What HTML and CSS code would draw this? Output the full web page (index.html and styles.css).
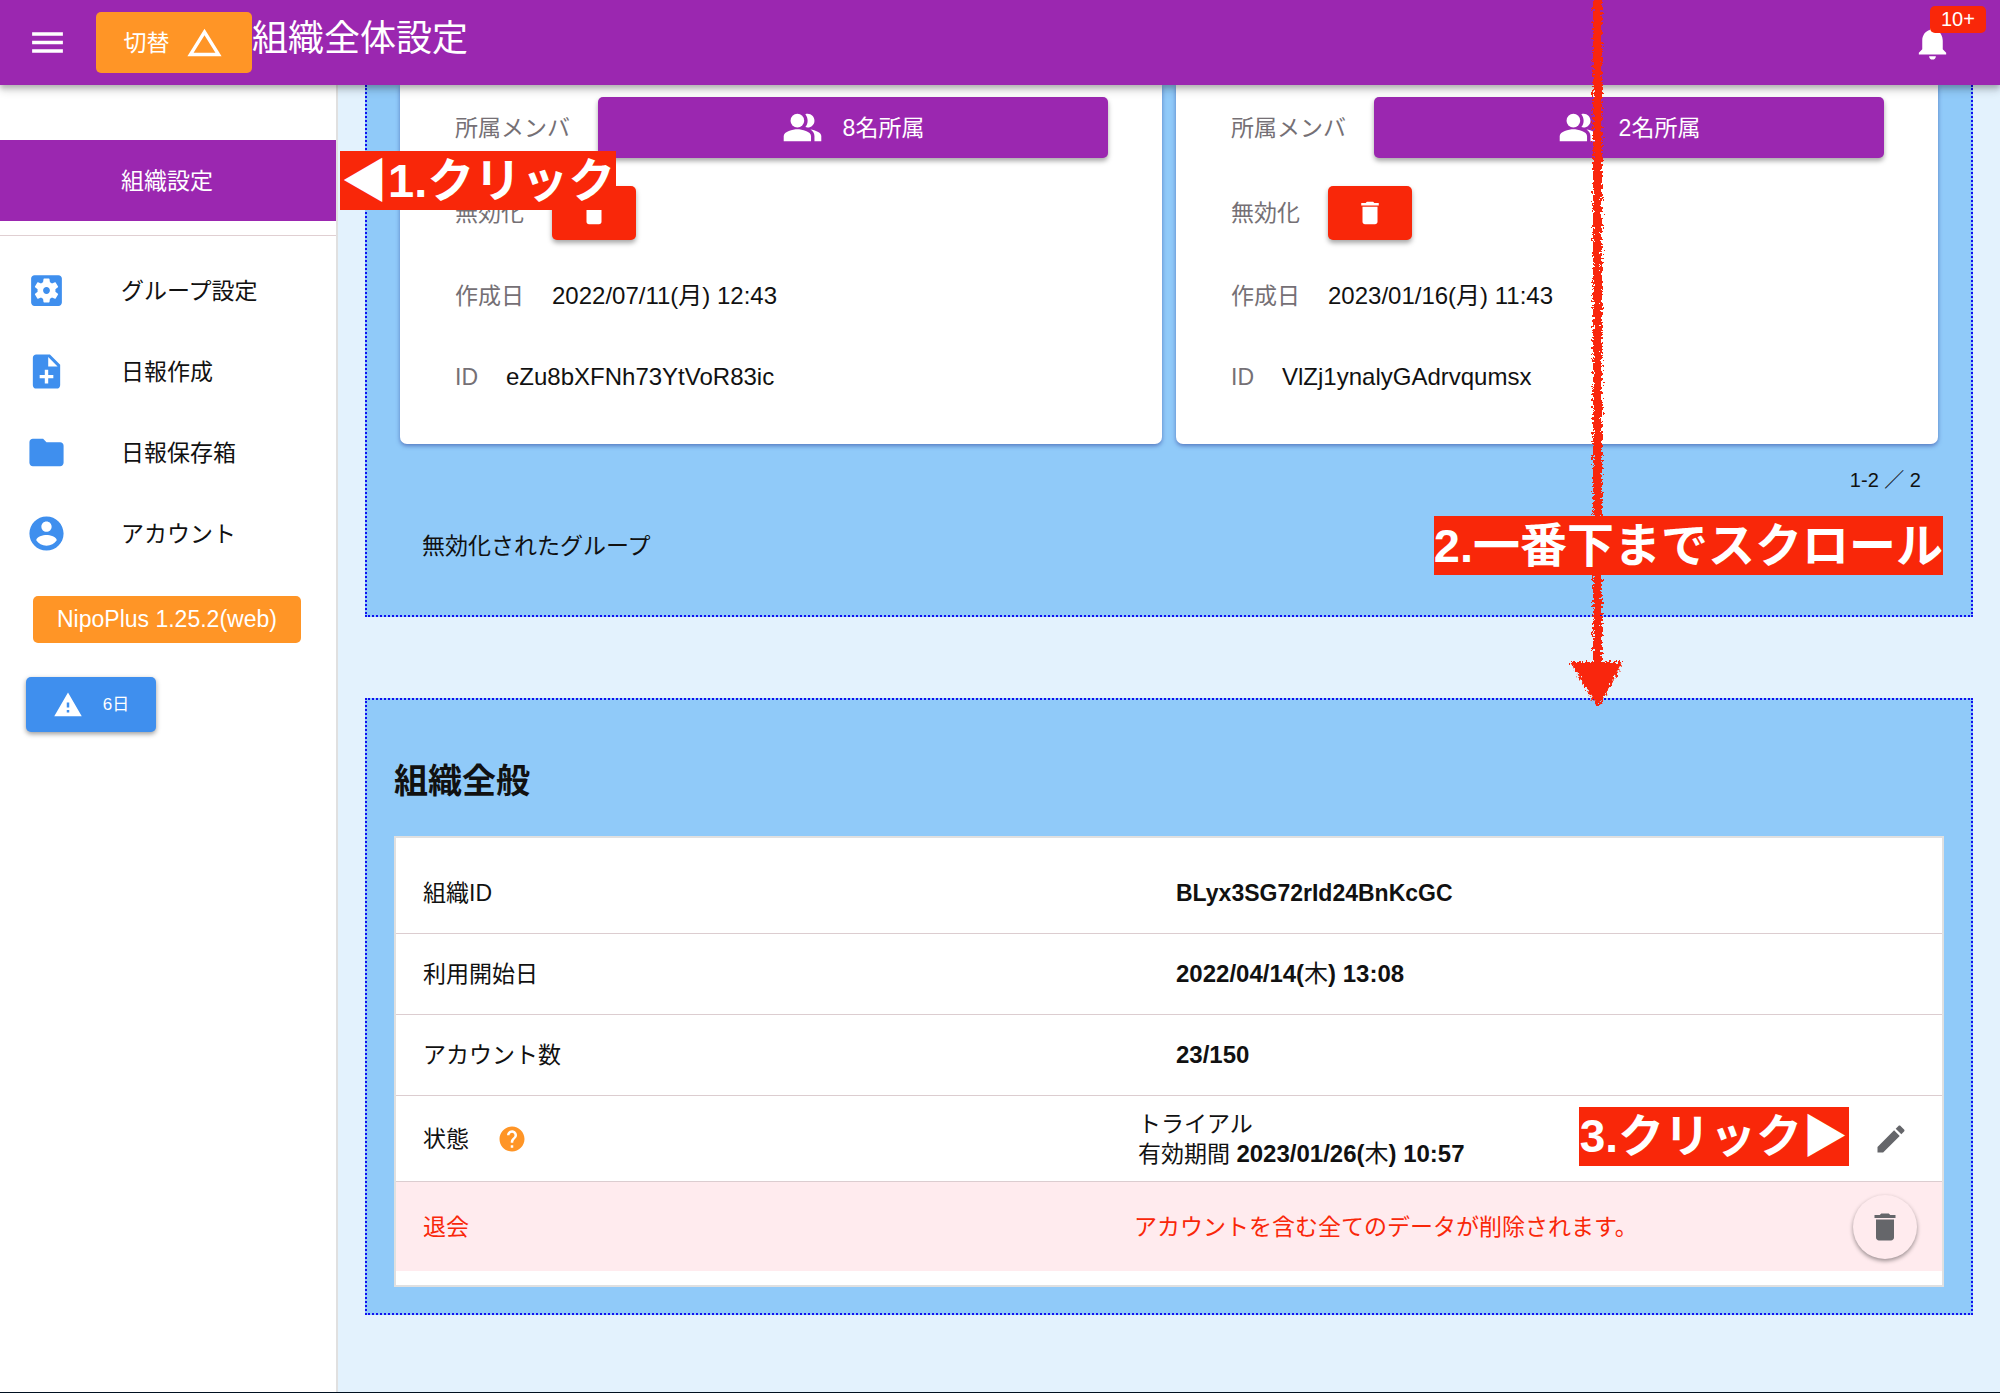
FILE: index.html
```html
<!DOCTYPE html>
<html lang="ja">
<head>
<meta charset="utf-8">
<meta name="viewport" content="width=device-width, initial-scale=1">
<title>組織全体設定</title>
<link rel="stylesheet" href="styles.css">
</head>
<body>
<svg class="defs" aria-hidden="true">
  <symbol id="i-menu" viewBox="0 0 24 24"><path d="M3 18h18v-2H3v2zm0-5h18v-2H3v2zm0-7v2h18V6H3z"/></symbol>
  <symbol id="i-triangle" viewBox="0 0 24 24"><path d="M12 7.77L18.39 18H5.61L12 7.77M12 4L2 20h20L12 4z"/></symbol>
  <symbol id="i-bell" viewBox="0 0 24 24"><path d="M12 22c1.1 0 2-.9 2-2h-4c0 1.1.89 2 2 2zm6-6v-5c0-3.07-1.64-5.64-4.5-6.32V4c0-.83-.67-1.5-1.5-1.5s-1.5.67-1.5 1.5v.68C7.63 5.36 6 7.92 6 11v5l-2 2v1h16v-1l-2-2z"/></symbol>
  <symbol id="i-settings" viewBox="0 0 24 24"><path d="M12 10c-1.1 0-2 .9-2 2s.9 2 2 2 2-.9 2-2-.9-2-2-2zm7-7H5c-1.11 0-2 .9-2 2v14c0 1.1.89 2 2 2h14c1.11 0 2-.9 2-2V5c0-1.1-.89-2-2-2zm-1.75 9c0 .23-.02.46-.05.68l1.48 1.16c.13.11.17.3.08.45l-1.4 2.42c-.09.15-.27.21-.43.15l-1.74-.7c-.36.28-.76.51-1.18.69l-.26 1.85c-.03.17-.18.3-.35.3h-2.8c-.17 0-.32-.13-.35-.29l-.26-1.85c-.43-.18-.82-.41-1.18-.69l-1.74.7c-.16.06-.34 0-.43-.15l-1.4-2.42c-.09-.15-.05-.34.08-.45l1.48-1.16c-.03-.23-.05-.46-.05-.69 0-.23.02-.46.05-.68l-1.48-1.16c-.13-.11-.17-.3-.08-.45l1.4-2.42c.09-.15.27-.21.43-.15l1.74.7c.36-.28.76-.51 1.18-.69l.26-1.85c.03-.17.18-.3.35-.3h2.8c.17 0 .32.13.35.29l.26 1.85c.43.18.82.41 1.18.69l1.74-.7c.16-.06.34 0 .43.15l1.4 2.42c.09.15.05.34-.08.45l-1.48 1.16c.03.23.05.46.05.69z"/></symbol>
  <symbol id="i-note" viewBox="0 0 24 24"><path d="M14 2H6c-1.1 0-1.99.9-1.99 2L4 20c0 1.1.89 2 1.99 2H18c1.1 0 2-.9 2-2V8l-6-6zm2 14h-3v3h-2v-3H8v-2h3v-3h2v3h3v2zm-3-7V3.500L18.500 9H13z"/></symbol>
  <symbol id="i-folder" viewBox="0 0 24 24"><path d="M10 4H4c-1.100 0-1.990.9-1.990 2L2 18c0 1.100.9 2 2 2h16c1.100 0 2-.9 2-2V8c0-1.100-.9-2-2-2h-8l-2-2z"/></symbol>
  <symbol id="i-account" viewBox="0 0 24 24"><path d="M12 2C6.480 2 2 6.480 2 12s4.480 10 10 10 10-4.480 10-10S17.520 2 12 2zm0 3c1.660 0 3 1.340 3 3s-1.340 3-3 3-3-1.340-3-3 1.340-3 3-3zm0 14.200c-2.500 0-4.710-1.280-6-3.220.030-1.990 4-3.080 6-3.080 1.990 0 5.970 1.090 6 3.080-1.290 1.940-3.500 3.220-6 3.220z"/></symbol>
  <symbol id="i-warning" viewBox="0 0 24 24"><path d="M1 21h22L12 2 1 21zm12-3h-2v-2h2v2zm0-4h-2v-4h2v4z"/></symbol>
  <symbol id="i-people" viewBox="0 0 24 24"><path d="M16.670 13.130C18.040 14.060 19 15.320 19 17v3h4v-3c0-2.180-3.570-3.470-6.330-3.870zM15 12c2.210 0 4-1.790 4-4s-1.790-4-4-4c-.47 0-.91.1-1.330.24C14.500 5.270 15 6.580 15 8s-.5 2.730-1.330 3.760c.42.14.86.24 1.330.24z"/><circle cx="9" cy="8" r="4"/><path d="M9 13c-2.670 0-8 1.340-8 4v3h16v-3c0-2.660-5.330-4-8-4z"/></symbol>
  <symbol id="i-trash" viewBox="0 0 24 24"><path d="M6 19c0 1.100.9 2 2 2h8c1.100 0 2-.9 2-2V7H6v12zM19 4h-3.500l-1-1h-5l-1 1H5v2h14V4z"/></symbol>
  <symbol id="i-help" viewBox="0 0 24 24"><path d="M12 2C6.480 2 2 6.480 2 12s4.480 10 10 10 10-4.480 10-10S17.520 2 12 2zm1 17h-2v-2h2v2zm2.070-7.750l-.9.920C13.450 12.900 13 13.500 13 15h-2v-.5c0-1.100.45-2.100 1.170-2.830l1.240-1.260c.37-.36.59-.86.59-1.410 0-1.100-.9-2-2-2s-2 .9-2 2H8c0-2.210 1.790-4 4-4s4 1.790 4 4c0 .88-.36 1.680-.93 2.250z"/></symbol>
  <symbol id="i-edit" viewBox="0 0 24 24"><path d="M3 17.250V21h3.750L17.810 9.940l-3.750-3.750L3 17.250zM20.710 7.040c.39-.39.39-1.020 0-1.410l-2.340-2.340c-.39-.39-1.020-.39-1.410 0l-1.830 1.830 3.750 3.750 1.830-1.830z"/></symbol>
</svg>

<header class="topbar">
  <button class="icon-btn" type="button" aria-label="メニュー"><svg class="icon"><use href="#i-menu"/></svg></button>
  <button class="switch" type="button">切替<svg class="icon"><use href="#i-triangle"/></svg></button>
  <h1 class="title">組織全体設定</h1>
  <button class="icon-btn bell" type="button" aria-label="通知"><svg class="icon"><use href="#i-bell"/></svg><span class="badge">10+</span></button>
</header>

<div class="layout">
  <nav class="sidebar">
    <a class="nav-item active" href="#org">組織設定<span class="note note-1">◀1.クリック</span></a>
    <hr class="rule">
    <a class="nav-item" href="#group"><svg class="icon"><use href="#i-settings"/></svg>グループ設定</a>
    <a class="nav-item" href="#report"><svg class="icon"><use href="#i-note"/></svg>日報作成</a>
    <a class="nav-item" href="#box"><svg class="icon"><use href="#i-folder"/></svg>日報保存箱</a>
    <a class="nav-item" href="#account"><svg class="icon"><use href="#i-account"/></svg>アカウント</a>
    <span class="version">NipoPlus 1.25.2(web)</span>
    <button class="trial" type="button"><svg class="icon-s"><use href="#i-warning"/></svg>6日</button>
  </nav>

  <main class="content">
    <section class="panel groups">
      <div class="cards">
        <article class="card">
          <div class="field tall"><span class="label">所属メンバ</span><button class="btn members" type="button"><svg class="icon"><use href="#i-people"/></svg>8名所属</button></div>
          <div class="field tall"><span class="label">無効化</span><button class="btn danger" type="button" aria-label="無効化"><svg class="icon-s"><use href="#i-trash"/></svg></button></div>
          <div class="field"><span class="label">作成日</span><span class="value">2022/07/11(月) 12:43</span></div>
          <div class="field"><span class="label">ID</span><span class="value">eZu8bXFNh73YtVoR83ic</span></div>
        </article>
        <article class="card">
          <div class="field tall"><span class="label">所属メンバ</span><button class="btn members" type="button"><svg class="icon"><use href="#i-people"/></svg>2名所属</button></div>
          <div class="field tall"><span class="label">無効化</span><button class="btn danger" type="button" aria-label="無効化"><svg class="icon-s"><use href="#i-trash"/></svg></button></div>
          <div class="field"><span class="label">作成日</span><span class="value">2023/01/16(月) 11:43</span></div>
          <div class="field"><span class="label">ID</span><span class="value">VlZj1ynalyGAdrvqumsx</span></div>
        </article>
      </div>
      <p class="pager">1-2 ／ 2</p>
      <p class="disabled-title">無効化されたグループ</p>
      <span class="note note-2">2.一番下までスクロール</span>
    </section>

    <section class="panel general">
      <h2 class="heading">組織全般</h2>
      <dl class="list">
        <div class="row"><dt>組織ID</dt><dd class="strong">BLyx3SG72rId24BnKcGC</dd></div>
        <div class="row"><dt>利用開始日</dt><dd class="strong value">2022/04/14(<span class="day">木</span>) 13:08</dd></div>
        <div class="row"><dt>アカウント数</dt><dd class="strong value">23/150</dd></div>
        <div class="row status">
          <dt>状態<svg class="icon-s help"><use href="#i-help"/></svg></dt>
          <dd>トライアル<br>有効期間 <span class="strong value">2023/01/26(<span class="day">木</span>) 10:57</span></dd>
          <dd class="action"><button class="edit" type="button" aria-label="編集"><svg class="icon-m"><use href="#i-edit"/></svg></button></dd>
          <dd class="note note-3">3.クリック▶</dd>
        </div>
        <div class="row leave">
          <dt>退会</dt>
          <dd>アカウントを含む全てのデータが削除されます。</dd>
          <dd class="action"><button class="round" type="button" aria-label="削除"><svg class="icon-m"><use href="#i-trash"/></svg></button></dd>
        </div>
      </dl>
    </section>
  </main>
</div>

<svg class="arrow" viewBox="0 0 60 708" aria-hidden="true">
  <filter id="chalk" filterUnits="userSpaceOnUse" x="0" y="-10" width="60" height="720">
    <feTurbulence type="fractalNoise" baseFrequency="0.4" numOctaves="3" seed="4" result="n"/>
    <feDisplacementMap in="SourceGraphic" in2="n" scale="9" xChannelSelector="R" yChannelSelector="G"/>
  </filter>
  <g filter="url(#chalk)"><path d="M27 -8h9v670h-9zM4 662h53L34 705h-4z"/></g>
</svg>
</body>
</html>
```

FILE: styles.css
```css
* { box-sizing: border-box; }

body {
  margin: 0;
  min-height: 100vh;
  display: flex;
  flex-direction: column;
  position: relative;
  font-family: "Liberation Sans", "Noto Sans CJK JP", sans-serif;
  font-size: 23px;
  line-height: 30px;
  color: #111;
  background: #e3f2fd;
  border-bottom: 1px solid #001020;
}

h1, h2, p, dl, dd { margin: 0; }
button { font: inherit; color: inherit; border: 0; padding: 0; background: none; cursor: pointer; }

.defs { position: absolute; width: 0; height: 0; }
.icon { width: 41px; height: 41px; fill: currentColor; flex: none; }
.icon-m { width: 36px; height: 36px; fill: currentColor; flex: none; }
.icon-s { width: 30px; height: 30px; fill: currentColor; flex: none; }

/* Top bar */
.topbar {
  position: sticky;
  top: 0;
  z-index: 2;
  height: 85px;
  padding: 0 47px 0 27px;
  display: flex;
  align-items: center;
  color: #fff;
  background: #9b27b0;
  box-shadow: 0 3px 5px rgba(0, 0, 0, .2), 0 6px 8px rgba(0, 0, 0, .14);
}
.icon-btn { display: flex; position: relative; }
.switch {
  width: 156px;
  height: 61px;
  margin-left: 28px;
  display: flex;
  align-items: center;
  justify-content: center;
  gap: 14px;
  border-radius: 5px;
  background: #ff9526;
}
.title { font-size: 36px; font-weight: 400; line-height: 44px; padding-bottom: 7px; }
.bell { margin-left: auto; }
.badge {
  position: absolute;
  left: 18px;
  top: -16px;
  padding: 0 11px;
  font-size: 20px;
  line-height: 27px;
  border-radius: 5px;
  background: #f92709;
}

/* Sidebar */
.layout { flex: 1; display: flex; }
.sidebar {
  flex: none;
  width: 338px;
  padding-top: 55px;
  background: #fff;
  border-right: 2px solid #e0e0e0;
  display: flex;
  flex-direction: column;
  align-items: flex-start;
}
.nav-item {
  position: relative;
  width: 100%;
  height: 81px;
  padding-left: 26px;
  display: flex;
  align-items: center;
  gap: 54px;
  color: #111;
  text-decoration: none;
}
.nav-item .icon { color: #3f8fee; }
.nav-item.active { padding-left: 121px; color: #fff; background: #9b27b0; }
.rule { width: 100%; height: 1px; margin: 14px 0; border: 0; background: #e0cfd2; }
.version {
  margin: 22px 0 34px 33px;
  padding: 0 24px;
  line-height: 47px;
  color: #fff;
  background: #ff9526;
  border-radius: 5px;
}
.trial {
  width: 130px;
  height: 55px;
  margin-left: 26px;
  display: flex;
  align-items: center;
  justify-content: center;
  gap: 20px;
  font-size: 17px;
  color: #fff;
  background: #3f8fee;
  border-radius: 5px;
  box-shadow: 0 2px 5px rgba(0, 0, 0, .4);
}

/* Panels */
.content { flex: 1; min-width: 0; padding: 0 27px 76px; }
.panel { position: relative; background: #90caf9; border: 2px dotted #1010f0; }
.groups { border-top: 0; padding: 0 33px 39px; }
.cards { display: grid; grid-template-columns: 1fr 1fr; gap: 14px; }
.card {
  padding: 0 54px 27px 55px;
  background: #fff;
  border-radius: 0 0 7px 7px;
  box-shadow: 0 2px 4px rgba(40, 60, 150, .55);
}
.field { display: flex; align-items: center; gap: 28px; height: 81px; }
.field.tall { height: 85px; }
.label { color: #757075; }
.value { font-size: 24px; }
.btn {
  display: flex;
  align-items: center;
  justify-content: center;
  color: #fff;
  border-radius: 5px;
  box-shadow: 0 3px 5px rgba(0, 0, 0, .35);
}
.members { flex: 1; height: 61px; gap: 20px; background: #9b27b0; }
.danger { width: 84px; height: 54px; background: #f92709; }
.pager { padding-right: 17px; font-size: 20px; line-height: 72px; text-align: right; }
.disabled-title { padding-left: 22px; line-height: 60px; }

.general { margin-top: 81px; padding: 56px 27px 26px; }
.heading { margin-bottom: 30px; font-size: 34px; line-height: 50px; font-weight: 700; }
.list { padding: 15px 0 14px; background: #fff; border: 2px solid #e0e0e0; }
.row {
  position: relative;
  display: grid;
  grid-template-columns: 1fr 1fr;
  column-gap: 14px;
  align-items: center;
  height: 81px;
  padding: 0 27px;
  border-bottom: 1px solid #dccdd0;
}
.row dt { display: flex; align-items: center; gap: 28px; }
.strong { font-weight: 700; }
.day { font-weight: 400; }
.help { color: #ff9526; }
.action { display: flex; justify-content: flex-end; color: #65666a; }
.status { grid-template-columns: 1fr 1fr 62px; height: 86px; }
.leave {
  grid-template-columns: 1fr 1fr 72px;
  height: 89px;
  padding-right: 25px;
  border: 0;
  color: #f92709;
  background: #ffebee;
}
.edit { display: flex; align-items: center; justify-content: center; width: 48px; height: 48px; }
.round {
  display: flex;
  align-items: center;
  justify-content: center;
  width: 64px;
  height: 64px;
  border-radius: 50%;
  background: #ffebee;
  box-shadow: 0 2px 4px rgba(0, 0, 0, .4);
}

/* Guide annotations */
.note {
  position: absolute;
  z-index: 4;
  padding: 0 1px;
  font-size: 47px;
  line-height: 59px;
  font-weight: 700;
  white-space: nowrap;
  color: #fff;
  background: #f92709;
}
.note-1 { left: 340px; top: 11px; }
.note-2 { right: 28px; bottom: 40px; padding: 0; }
.note-3 { right: 93px; top: 11px; font-size: 46px; }
.arrow {
  position: absolute;
  z-index: 3;
  top: 0;
  right: 374px;
  width: 60px;
  height: 708px;
  fill: #f92709;
}
```
